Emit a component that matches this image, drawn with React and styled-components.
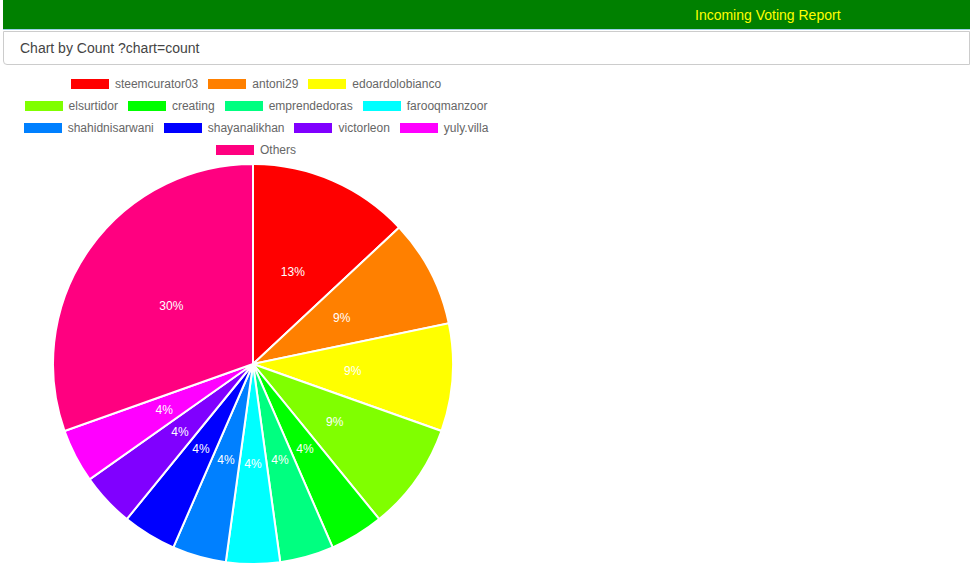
import React from 'react';
import styled, { createGlobalStyle } from 'styled-components';

const GlobalStyle = createGlobalStyle`
  body {
    margin: 0;
    background: #fff;
    font-family: "Liberation Sans", Arial, sans-serif;
  }
`;

const Page = styled.div`
  padding-left: 3px;
  width: 967px;
`;

const Header = styled.div`
  height: 29px;
  background: #008000;
  border-bottom: 1px solid #9ad0e8;
  display: flex;
  align-items: center;
  padding-left: 692px;
  color: #ffff00;
  font-size: 14px;
`;

const Card = styled.div`
  height: 32px;
  margin-top: 1px;
  border: 1px solid #ccc;
  border-radius: 0 0 0 4px;
  display: flex;
  align-items: center;
  padding-left: 16px;
  color: #444;
  font-size: 14px;
`;

const ChartArea = styled.div`
  width: 506px;
  padding-top: 8px;
`;

const Legend = styled.div`
  display: flex;
  flex-direction: column;
  align-items: center;
`;

const LegendRow = styled.div`
  display: flex;
  gap: 10px;
  height: 22px;
  align-items: center;
`;

const LegendItem = styled.div`
  display: flex;
  align-items: center;
  gap: 6px;
  font-size: 12px;
  color: #666;
`;

const Swatch = styled.span`
  width: 38px;
  height: 10px;
  background: ${p => p.$color};
`;

const Chart = styled.svg`
  display: block;
  margin-top: 4px;
`;

const data = [
  ['steemcurator03', '#ff0000', 3],
  ['antoni29', '#ff8000', 2],
  ['edoardolobianco', '#ffff00', 2],
  ['elsurtidor', '#80ff00', 2],
  ['creating', '#00ff00', 1],
  ['emprendedoras', '#00ff80', 1],
  ['farooqmanzoor', '#00ffff', 1],
  ['shahidnisarwani', '#0080ff', 1],
  ['shayanalikhan', '#0000ff', 1],
  ['victorleon', '#8000ff', 1],
  ['yuly.villa', '#ff00ff', 1],
  ['Others', '#ff0080', 7],
];

const rows = [data.slice(0, 3), data.slice(3, 7), data.slice(7, 11), data.slice(11)];

const total = data.reduce((s, d) => s + d[2], 0);
const cx = 250;
const cy = 199;
const r = 200;

const pt = (a, rad) => [cx + rad * Math.sin(a), cy - rad * Math.cos(a)];

const Pie = () => {
  let start = 0;
  return (
    <Chart width="506" height="404" viewBox="0 0 506 404">
      {data.map(([name, color, n]) => {
        const end = start + (n / total) * Math.PI * 2;
        const [x1, y1] = pt(start, r);
        const [x2, y2] = pt(end, r);
        const large = end - start > Math.PI ? 1 : 0;
        const mid = (start + end) / 2;
        const [lx, ly] = pt(mid, 100);
        start = end;
        return (
          <g key={name}>
            <path
              d={`M${cx} ${cy} L${x1} ${y1} A${r} ${r} 0 ${large} 1 ${x2} ${y2} Z`}
              fill={color}
              stroke="#fff"
              strokeWidth="2"
            />
            <text x={lx} y={ly + 4} fill="#fff" fontSize="12" textAnchor="middle"
              fontFamily="Liberation Sans, Arial, sans-serif">
              {Math.round((n / total) * 100)}%
            </text>
          </g>
        );
      })}
    </Chart>
  );
};

export default function App() {
  return (
    <Page>
      <GlobalStyle />
      <Header>Incoming Voting Report</Header>
      <Card>Chart by Count ?chart=count</Card>
      <ChartArea>
        <Legend>
          {rows.map((row, i) => (
            <LegendRow key={i}>
              {row.map(([name, color]) => (
                <LegendItem key={name}>
                  <Swatch $color={color} />
                  {name}
                </LegendItem>
              ))}
            </LegendRow>
          ))}
        </Legend>
        <Pie />
      </ChartArea>
    </Page>
  );
}
